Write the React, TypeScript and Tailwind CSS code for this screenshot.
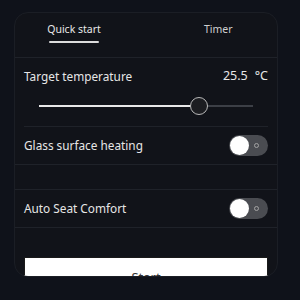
import React from 'react'

const Toggle = () => (
  <div className="relative w-[39px] h-[21px] rounded-full bg-[#4a4c51]">
    <div className="absolute left-[1px] top-[1px] w-[19px] h-[19px] rounded-full bg-white" />
    <div className="absolute right-[9px] top-[8px] w-[5px] h-[5px] rounded-full border border-[#a3a3a3]" />
  </div>
)

export default function App() {
  const value = 25.5
  const pct = 74.6

  return (
    <main className="w-[300px] h-[300px] bg-[#0f121a] pt-[12px] pl-[14px] font-['Noto_Sans',sans-serif] text-[#e6e6e6]">
      <div className="w-[264px] h-[265px] rounded-[14px] border border-[#1b1e25] bg-[#111319] overflow-hidden flex flex-col">

        {/* Tabs */}
        <div className="h-[45px] shrink-0 flex items-start border-b border-[#1f2229]">
          <div className="ml-[34px] mt-[8px] w-[50px] flex flex-col items-center">
            <span className="block text-[10.5px] leading-[16px] text-[#e8e8e8] whitespace-nowrap">Quick start</span>
            <span className="block mt-[4px] h-[2px] w-[50px] bg-[#dcdcdc] rounded-full" />
          </div>
          <span className="block ml-[105px] mt-[8px] text-[10.5px] leading-[16px] text-[#cfcfcf]">Timer</span>
        </div>

        {/* Target temperature */}
        <div className="mx-[9px] h-[69px] shrink-0 border-b border-[#1f2229] pt-[9px]">
          <div className="flex justify-between items-center text-[11.8px] leading-[18px]">
            <span>Target temperature</span>
            <span className="flex gap-[7px] text-[12.5px]"><span>{value}</span><span>°C</span></span>
          </div>
          <div className="relative mx-[15px] mt-[12px] h-[18px]">
            <div className="absolute left-0 right-0 top-[8px] h-[1.5px] bg-[#3c3f46]" />
            <div className="absolute left-0 top-[8px] h-[2px] bg-[#e8e8e8]" style={{ width: `${pct}%` }} />
            <div
              className="absolute top-0 w-[18px] h-[18px] -ml-[9px] rounded-full bg-[#1c1d21] border-[1.5px] border-[#b9b9b9]"
              style={{ left: `${pct}%` }}
            />
          </div>
        </div>

        {/* Glass surface heating */}
        <div className="h-[38px] shrink-0 border-b border-[#1f2229]">
          <div className="mx-[9px] h-full flex items-center justify-between text-[11.8px]">
            <span>Glass surface heating</span>
            <Toggle />
          </div>
        </div>

        <div className="h-[25px] shrink-0 border-b border-[#1f2229]" />

        {/* Auto Seat Comfort */}
        <div className="h-[38px] shrink-0 border-b border-[#1f2229]">
          <div className="mx-[9px] h-full flex items-center justify-between text-[11.8px]">
            <span>Auto Seat Comfort</span>
            <Toggle />
          </div>
        </div>

        <div className="mx-[9px] mt-[29px]">
          <button className="w-full h-[22px] bg-white border border-[#1a1a1a] overflow-hidden flex justify-center">
            <span className="pt-[10px] text-[13px] leading-[18px] text-[#333]">Start</span>
          </button>
        </div>
      </div>
    </main>
  )
}
